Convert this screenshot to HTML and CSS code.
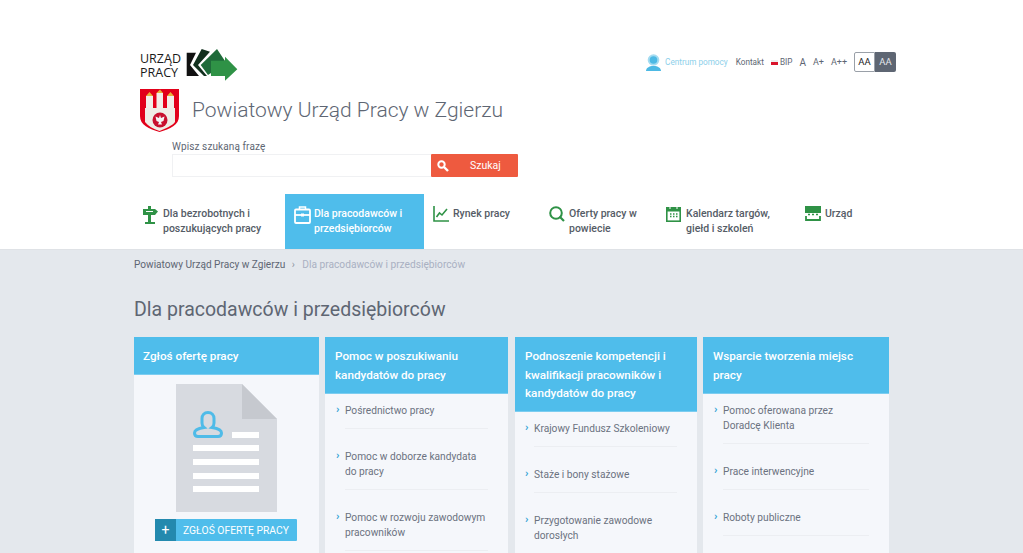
FILE: index.html
```html
<!DOCTYPE html>
<html lang="pl">
<head>
    <meta charset="UTF-8">
    <meta name="viewport" content="width=device-width, initial-scale=1.0">
    <title>Dla pracodawców i przedsiębiorców</title>
    <link rel="stylesheet" href="styles.css">
</head>
<body>
    <header class="site-header">
        <div class="top-row">
            <div class="brand">
                <a class="logo-up" href="#">
                    <span class="logo-text">URZĄD<br>PRACY</span>
                    <svg class="logo-arrows" width="53" height="34" viewBox="0 0 53 34">
                        <path d="M1.700 5.700H11L5 18l9 11H1.700z" fill="#111"/>
                        <path d="M16.700 2L25 4.700 13 18l9 11h-3L8 18z" fill="#12301e"/>
                        <path d="M32 2L15.700 18 23 28l3-2V14h14z" fill="#1f6b3a"/>
                        <path d="M26 13.700h14v-4l12.300 12.600L40 33.700V29H26z" fill="#2f9246"/>
                    </svg>
                </a>
                <div class="office">
                    <svg class="crest" width="39" height="43" viewBox="0 0 39 43">
                        <path d="M0 0h39v27c0 9-9 13-19.500 16C9 40 0 36 0 27z" fill="#e2001a"/>
                        <path d="M6 7h7v13H6zM16.500 4H23v16h-6.500zM27 7h7v13h-7z" fill="#f1efe9"/>
                        <path d="M6 7l3.500-4L13 7zM16.500 4L20 .5 23 4zM27 7l3.500-4L34 7z" fill="#e8b23a"/>
                        <path d="M5 19h30v14c-3 4-9 6-15.500 9C13 40 8 37 5 33z" fill="#efede6"/>
                        <circle cx="20" cy="31" r="7.500" fill="#c8102e"/>
                        <path d="M20 26l1 3 3.500-1.500-1 4.500-2.500 1 1 2.500h-4l1-2.500-2.500-1-1-4.500L19 29z" fill="#f5f5f5"/>
                    </svg>
                    <h2 class="office-name">Powiatowy Urząd Pracy w Zgierzu</h2>
                </div>
            </div>
            <nav class="tools">
                <a class="help" href="#">
                    <svg width="15" height="17" viewBox="0 0 15 17">
                        <circle cx="7.500" cy="6" r="5.800" fill="#a5dcf1"/>
                        <circle cx="7.500" cy="6" r="3.800" fill="#4db9e4"/>
                        <path d="M0 17c0-3 3-5 7.500-5s7.500 2 7.500 5z" fill="#4db9e4"/>
                    </svg>
                    Centrum pomocy
                </a>
                <a href="#">Kontakt</a>
                <a class="bip" href="#"><span class="bip-flag"></span>BIP</a>
                <a class="size-a" href="#">A</a>
                <a class="size-b" href="#">A+</a>
                <a class="size-b" href="#">A++</a>
                <div class="contrast">
                    <span class="contrast-light">AA</span>
                    <span class="contrast-dark">AA</span>
                </div>
            </nav>
        </div>
        <form class="search">
            <label for="q">Wpisz szukaną frazę</label>
            <div class="search-row">
                <input type="text" id="q">
                <button type="button">
                    <svg width="12" height="12" viewBox="0 0 12 12"><circle cx="4.500" cy="4.500" r="3.200" fill="none" stroke="#fff" stroke-width="2"/><path d="M7 7l4 4" stroke="#fff" stroke-width="2.400"/></svg>
                    <span>Szukaj</span>
                </button>
            </div>
        </form>
        <nav class="main-menu">
            <a class="menu-item m1" href="#">
                <svg width="15" height="18" viewBox="0 0 15 18"><path d="M0 3h12l3 2.500L12 9H0z" fill="#2f9246"/><rect x="5" y="0" width="3" height="16" fill="#2f9246"/><rect x="2" y="16" width="10" height="2" fill="#2f9246"/><rect x="3" y="5" width="7" height="1" fill="#fff"/></svg>
                <span>Dla bezrobotnych i poszukujących pracy</span>
            </a>
            <a class="menu-item m2 active" href="#">
                <svg width="17" height="18" viewBox="0 0 17 18"><path d="M5.500 3.500V1h6v2.500" fill="none" stroke="#fff" stroke-width="1.500"/><rect x="1" y="3.500" width="15" height="13.500" rx="1" fill="none" stroke="#fff" stroke-width="1.800"/><path d="M1 9h15" stroke="#fff" stroke-width="1.800"/><rect x="7" y="7.500" width="3" height="3" fill="#fff"/></svg>
                <span>Dla pracodawców i przedsiębiorców</span>
            </a>
            <a class="menu-item m3" href="#">
                <svg width="16" height="16" viewBox="0 0 16 16"><path d="M1 0v15h15" fill="none" stroke="#2f9246" stroke-width="1.600"/><path d="M3.500 11l3-4 2.500 2 5-6" fill="none" stroke="#2f9246" stroke-width="1.600"/></svg>
                <span>Rynek pracy</span>
            </a>
            <a class="menu-item m4" href="#">
                <svg width="16" height="16" viewBox="0 0 16 16"><circle cx="7" cy="7" r="5.800" fill="none" stroke="#2f9246" stroke-width="2"/><path d="M10.500 10.500l4.500 4.500" stroke="#2f9246" stroke-width="2.200"/></svg>
                <span>Oferty pracy w powiecie</span>
            </a>
            <a class="menu-item m5" href="#">
                <svg width="15" height="16" viewBox="0 0 15 16"><rect x=".8" y="1.800" width="13.400" height="13.400" fill="none" stroke="#2f9246" stroke-width="1.600"/><rect x="1" y="2" width="13" height="3.500" fill="#2f9246"/><path d="M4 0v3M11 0v3" stroke="#fff" stroke-width="1"/><path d="M4 8h1.500M7 8h1.500M10 8h1.500M4 10.500h1.500M7 10.500h1.500M10 10.500h1.500" stroke="#2f9246" stroke-width="1.500"/></svg>
                <span>Kalendarz targów, giełd i szkoleń</span>
            </a>
            <a class="menu-item m6" href="#">
                <svg width="16" height="15" viewBox="0 0 16 15"><rect x="0" y="0" width="16" height="7" fill="#2f9246"/><path d="M3 8.500h2M7 8.500h2M11 8.500h2" stroke="#2f9246" stroke-width="1.500"/><path d="M1 10v4h14v-4" fill="none" stroke="#2f9246" stroke-width="1.800"/></svg>
                <span>Urząd</span>
            </a>
        </nav>
    </header>

    <main class="content">
        <div class="breadcrumbs">
            <a href="#">Powiatowy Urząd Pracy w Zgierzu</a>
            <span class="sep">›</span>
            <span class="current">Dla pracodawców i przedsiębiorców</span>
        </div>
        <h1>Dla pracodawców i przedsiębiorców</h1>
        <div class="columns">
            <section class="card card-a">
                <h3>Zgłoś ofertę pracy</h3>
                <div class="offer">
                    <svg class="doc" width="101" height="128" viewBox="0 0 101 128">
                        <path d="M0 0h66l35 35v93H0z" fill="#d7dae0"/>
                        <path d="M66 0l35 35H66z" fill="#c6c9cf"/>
                        <path d="M32 28.500c-3.800 0-6 2.500-6 6V39c0 2 .7 3.500 2 4.500-5 .8-9.500 2.500-9.500 5.500 0 2.500 1.500 3.500 3.500 3.500h20c2 0 3.500-1 3.500-3.500 0-3-4.500-4.700-9.500-5.500 1.300-1 2-2.500 2-4.500v-4.500c0-3.500-2.200-6-6-6z" fill="none" stroke="#4fbbe8" stroke-width="3"/>
                        <rect x="56" y="48" width="27" height="6" fill="#fff"/>
                        <rect x="17" y="61" width="66" height="6" fill="#fff"/>
                        <rect x="17" y="75" width="66" height="6" fill="#fff"/>
                        <rect x="17" y="89" width="66" height="6" fill="#fff"/>
                        <rect x="17" y="102" width="66" height="6" fill="#fff"/>
                    </svg>
                    <a class="offer-btn" href="#"><span class="plus">+</span><span class="offer-label">ZGŁOŚ OFERTĘ PRACY</span></a>
                </div>
            </section>
            <section class="card card-b">
                <h3>Pomoc w poszukiwaniu kandydatów do pracy</h3>
                <ul>
                    <li><a href="#">Pośrednictwo pracy</a></li>
                    <li><a href="#">Pomoc w doborze kandydata do pracy</a></li>
                    <li><a href="#">Pomoc w rozwoju zawodowym pracowników</a></li>
                </ul>
            </section>
            <section class="card card-c">
                <h3>Podnoszenie kompetencji i kwalifikacji pracowników i kandydatów do pracy</h3>
                <ul>
                    <li><a href="#">Krajowy Fundusz Szkoleniowy</a></li>
                    <li><a href="#">Staże i bony stażowe</a></li>
                    <li><a href="#">Przygotowanie zawodowe dorosłych</a></li>
                </ul>
            </section>
            <section class="card card-d">
                <h3>Wsparcie tworzenia miejsc pracy</h3>
                <ul>
                    <li><a href="#">Pomoc oferowana przez Doradcę Klienta</a></li>
                    <li><a href="#">Prace interwencyjne</a></li>
                    <li><a href="#">Roboty publiczne</a></li>
                </ul>
            </section>
        </div>
    </main>
</body>
</html>
```

FILE: styles.css
```css
html, body {
    height: 553px;
    overflow: hidden;
}

body {
    margin: 0;
    font-family: Roboto, sans-serif;
    color: #5e6673;
    background-color: #e4e8ed;
}

a {
    color: inherit;
    text-decoration: none;
}

.site-header {
    height: 250px;
    background-color: #fff;
    border-bottom: 1px solid #dfe2e6;
    box-sizing: border-box;
    padding: 47px 127px 0 134px;
}

.top-row {
    display: flex;
    justify-content: space-between;
}

.brand {
    padding-left: 6px;
}

.logo-up {
    display: flex;
    align-items: flex-start;
    gap: 4px;
    height: 42px;
}

.logo-text {
    margin-top: 5px;
    font-family: "Open Sans", sans-serif;
    font-size: 12.5px;
    line-height: 14px;
    color: #1a1a1a;
    font-weight: 500;
}

.office {
    display: flex;
    align-items: center;
    gap: 13px;
}

.office-name {
    margin: 0 0 2px;
    font-size: 21px;
    font-weight: 300;
    color: #5e6673;
}

.tools {
    display: flex;
    align-items: center;
    gap: 7px;
    height: 28px;
    margin-top: 1px;
    font-size: 8.2px;
    color: #5e6673;
}

.help {
    display: flex;
    align-items: center;
    gap: 4px;
    margin-right: 1px;
    color: #8ccfea;
}

.bip {
    display: flex;
    align-items: center;
    gap: 2px;
}

.bip-flag {
    display: block;
    width: 7px;
    height: 5px;
    background: linear-gradient(#eee 40%, #d9142b 40%);
}

.size-a {
    font-size: 10px;
}

.size-b {
    font-size: 9px;
}

.contrast {
    display: flex;
    font-size: 9.5px;
    line-height: 18px;
    text-align: center;
}

.contrast-light {
    width: 19px;
    color: #222;
    border: 1px solid #9aa0a8;
    border-radius: 2px 0 0 2px;
}

.contrast-dark {
    width: 21px;
    line-height: 20px;
    color: #e4e8ed;
    background-color: #5e6673;
    border-radius: 0 2px 2px 0;
}

.search {
    margin: 8px 0 0 38px;
    width: 346px;
}

.search label {
    display: block;
    font-size: 10px;
    line-height: 14px;
    letter-spacing: .1px;
    color: #5e6673;
}

.search-row {
    display: flex;
    height: 23px;
}

.search input {
    flex: 1;
    min-width: 0;
    padding: 0;
    border: 1px solid #f0f1f3;
    border-right: none;
    background-color: #fff;
}

.search button {
    display: flex;
    align-items: center;
    width: 87px;
    padding: 0 0 0 6px;
    border: none;
    border-radius: 1px;
    color: #fff;
    background-color: #ee5a3f;
    font-family: inherit;
    font-size: 10.5px;
}

.search button span {
    margin-left: 21px;
}

.main-menu {
    display: flex;
    margin-top: 17px;
    font-size: 10.5px;
    line-height: 15px;
    font-weight: 500;
    color: #555c66;
}

.menu-item {
    display: flex;
    align-items: flex-start;
    gap: 5px;
    box-sizing: border-box;
    height: 55px;
    padding-top: 12px;
}

.menu-item svg {
    flex-shrink: 0;
}

.m1 { width: 151px; padding-left: 9px; }
.m2 { width: 139px; padding-left: 9px; gap: 3px; }
.m3 { width: 116px; padding-left: 9px; gap: 4px; }
.m4 { width: 116px; padding-left: 9px; gap: 4px; }
.m5 { width: 149px; padding-left: 10px; }
.m6 { gap: 4px; }

.m1 span { width: 105px; }
.m2 span { width: 100px; }
.m4 span { width: 76px; }
.m5 span { width: 95px; }

.menu-item.active {
    color: #fff;
    background-color: #4fbdeb;
}

.content {
    padding: 0 134px;
}

.breadcrumbs {
    padding-top: 8px;
    font-size: 10.1px;
    line-height: 14px;
    color: #5e6673;
}

.sep {
    margin: 0 5px 0 4px;
    color: #8a93a0;
}

.current {
    font-size: 10.2px;
    color: #a9b0c2;
}

h1 {
    margin: 24px 0 13px;
    font-size: 19.5px;
    line-height: 28px;
    font-weight: 400;
    color: #5e6673;
}

.columns {
    display: flex;
    align-items: flex-start;
    gap: 6px;
    width: 755px;
}

.card {
    background-color: #f5f7fb;
    min-height: 230px;
}

.card-a { width: 185px; }
.card-b { width: 183px; }
.card-c { width: 182px; margin-left: 1px; }
.card-d { width: 186px; }

.card h3 {
    margin: 0;
    padding: 10px 10px 8.5px;
    font-size: 11.7px;
    line-height: 18.500px;
    font-weight: 500;
    color: #fff;
    background-color: #4fbdeb;
    border-bottom: 1px solid #7ccdf0;
}

.card-a h3 {
    padding-left: 9px;
}

.card ul {
    margin: 0;
    padding: 9px 20px 0 20px;
    list-style: none;
    font-size: 10.2px;
    line-height: 15px;
    color: #6b7280;
}

.card-c ul {
    padding-left: 19px;
}

.card li {
    position: relative;
    padding-bottom: 10px;
    margin-bottom: 20px;
    border-bottom: 1px solid #eceef2;
    min-height: 15px;
}

.card li::before {
    content: "›";
    position: absolute;
    left: -9px;
    top: -1px;
    font-size: 11.5px;
    color: #35a5d6;
    font-weight: 700;
}

.offer {
    display: flex;
    flex-direction: column;
    align-items: center;
    padding-top: 9px;
}

.offer-btn {
    display: flex;
    align-items: center;
    width: 142px;
    height: 22px;
    margin-top: 7px;
    margin-right: 1px;
    color: #fff;
    background-color: #4fbdeb;
    border-radius: 1px;
    font-size: 10.3px;
    white-space: nowrap;
}

.plus {
    width: 21px;
    line-height: 22px;
    text-align: center;
    font-size: 14px;
    background-color: #2389ae;
}

.offer-label {
    margin-left: 7px;
}
```
